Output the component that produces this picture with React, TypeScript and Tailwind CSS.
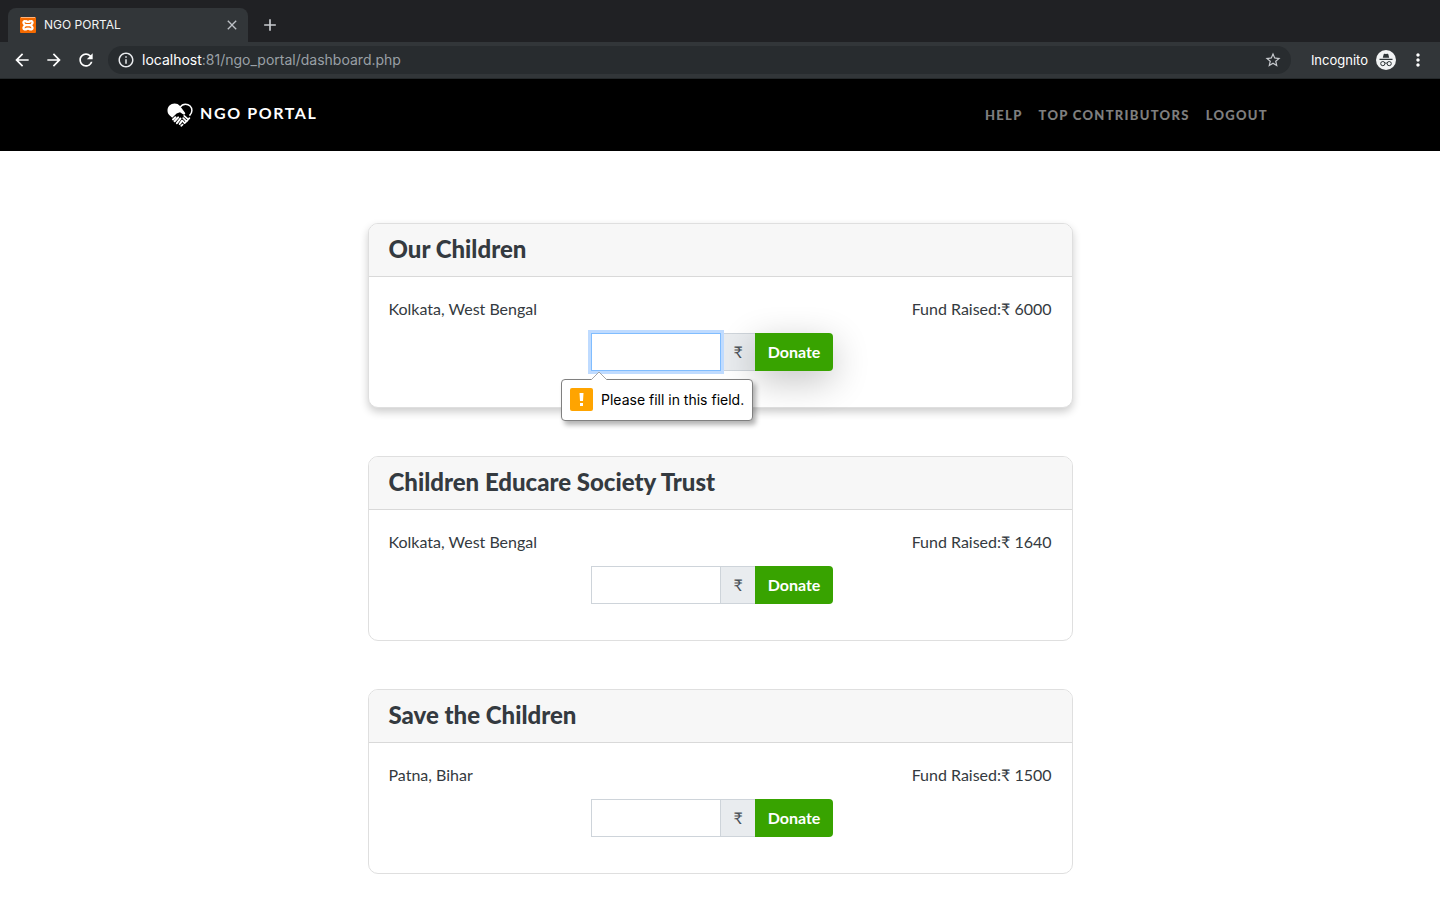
import { useId } from "react";
import { MdArrowBack, MdArrowForward, MdRefresh, MdInfoOutline, MdStarBorder, MdMoreVert, MdClose, MdAdd } from "react-icons/md";

function XamppIcon() {
  return (
    <svg viewBox="0 0 16 16" className="size-4" aria-hidden="true">
      <rect width="16" height="16" rx="1" fill="#f56a00" />
      <rect x="1" y="0" width="14" height="1" fill="#ffb37a" />
      <g fill="none" stroke="#fff" strokeWidth="2.2" strokeLinecap="round" strokeLinejoin="round">
        <path d="M6.500 4.500C5 3.700 3.400 4 3.400 5.600c0 1.500 1.500 1.400 1.500 2.600S3.400 9.400 3.400 11c0 1.500 1.600 1.800 3.100 1" />
        <path d="M9.500 4.500c1.500-.8 3.100-.5 3.100 1.100 0 1.500-1.500 1.400-1.500 2.600s1.500 1.200 1.500 2.800c0 1.500-1.600 1.800-3.100 1" />
        <path d="M6.500 4.500c1 .6 2 .6 3 0M6.500 12c1-.6 2-.6 3 0M5.500 8.200h5" />
      </g>
    </svg>
  );
}

function IncognitoIcon() {
  return (
    <svg viewBox="0 0 20 20" className="size-5" aria-hidden="true">
      <circle cx="10" cy="10" r="10" fill="#f1f3f4" />
      <path d="M6.800 7.800 7.700 4.200c.1-.4.500-.6.900-.5l1.400.4 1.400-.4c.4-.1.800.1.900.500l.9 3.600zM3.500 8.700h13v1.200h-13z" fill="#2e3538" />
      <g fill="none" stroke="#2e3538" strokeWidth="1">
        <circle cx="6.800" cy="13.600" r="2.100" />
        <circle cx="13.200" cy="13.600" r="2.100" />
        <path d="M8.900 13.400c.6-.5 1.600-.5 2.200 0" />
      </g>
    </svg>
  );
}

function HeartHandsLogo() {
  return (
    <svg viewBox="0 0 26 24" className="h-6 w-[26px]" aria-hidden="true">
      <path
        d="M13 3C11.600 1.300 9.800.5 7.600.5 3.500.5.500 3.500.500 7.400c0 2 .7 3.500 2 4.900l2.700 2.400 4.400-4.300 3.400-1.200 3.400 2.300c1.300.5 2.300-.7 1.600-1.800z"
        fill="#fff"
      />
      <path d="M13.200 4.200C14.400 2.200 16.300 1.200 18.500 1.200c3.700 0 6.400 2.700 6.400 6.200 0 2.200-.9 3.700-2.400 5.200" fill="none" stroke="#fff" strokeWidth="1.500" />
      <path d="m8.400 14.200-2.400 2.200m5.200-2-3.600 3.900m5.800-2.700-3.500 4.500m5.200-2.400-2.400 3.300" stroke="#fff" strokeWidth="2" strokeLinecap="round" />
      <path d="m14.200 22.800 1.400-1.200M16 18.200l1.600 2 1.100-1.100m-2.500-3.900 3.400 3.200 1.100-1.200m-3.500-4.300 4 3.500 1.200-1.300" fill="none" stroke="#fff" strokeWidth="1.700" strokeLinecap="round" strokeLinejoin="round" />
    </svg>
  );
}

function BrowserBar() {
  return (
    <div className="bg-[#202124] font-[Inter,sans-serif] text-white">
      <div className="flex h-[42px] items-end pl-2">
        <div className="flex h-[34px] w-60 items-center rounded-t-lg bg-[#323639] px-3 text-xs">
          <XamppIcon />
          <span className="ml-2 flex-1 text-[#f1f3f4]">NGO PORTAL</span>
          <button aria-label="Close tab" className="-mr-1 text-[#bdc1c6]">
            <MdClose className="size-4" />
          </button>
        </div>
        <button aria-label="New tab" className="ml-3 flex h-[34px] items-center text-[#c8cbcf]">
          <MdAdd className="size-5" />
        </button>
      </div>
      <div className="flex h-[37px] items-center border-b border-[#25292b] bg-[#323639] px-3">
        <button aria-label="Back"><MdArrowBack className="size-5" /></button>
        <button aria-label="Forward" className="ml-3"><MdArrowForward className="size-5" /></button>
        <button aria-label="Reload" className="ml-3"><MdRefresh className="size-5" /></button>
        <div className="ml-3 flex h-7 flex-1 items-center rounded-full bg-[#282c2f] px-[9px]">
          <MdInfoOutline className="size-[18px] text-[#e8eaed]" />
          <p className="ml-[7px] flex-1 text-sm text-[#9aa0a6]">
            <span className="text-white">localhost</span>:81/ngo_portal/dashboard.php
          </p>
          <button aria-label="Bookmark this page" className="text-[#c8cbcf]"><MdStarBorder className="size-[18px]" /></button>
        </div>
        <span className="ml-5 mr-2 pt-px text-[13px]">Incognito</span>
        <IncognitoIcon />
        <button aria-label="Menu" className="ml-3"><MdMoreVert className="size-5" /></button>
      </div>
    </div>
  );
}

function SiteNav() {
  return (
    <nav className="bg-black">
      <div className="mx-auto flex h-[72px] max-w-[1106px] items-center justify-between">
        <a href="#home" className="flex items-center gap-[7px] font-bold tracking-widest text-white">
          <HeartHandsLogo />
          <span className="pb-1">NGO PORTAL</span>
        </a>
        <div className="flex gap-4 pr-[5px] pt-0.5 text-[13px] font-black tracking-widest text-white/50">
          <a href="#help">HELP</a>
          <a href="#contributors">TOP CONTRIBUTORS</a>
          <a href="#logout">LOGOUT</a>
        </div>
      </div>
    </nav>
  );
}

function RequiredHint() {
  return (
    <div role="alert" className="absolute left-[-30px] top-[46px] z-10 flex h-[42px] items-center whitespace-nowrap rounded border border-[#808080] bg-white px-2 font-[Inter,sans-serif] text-sm text-black shadow-[3px_4px_5px_rgba(0,0,0,0.3)]">
      <svg viewBox="0 0 16 9" className="absolute left-[29px] top-[-9px] h-[9px] w-4" aria-hidden="true">
        <path d="M0 9 8 1l8 8" fill="#fff" stroke="#a6a6a6" />
      </svg>
      <svg viewBox="0 0 23 24" className="mr-2 h-6 w-[23px]" aria-hidden="true">
        <rect width="23" height="23" rx="2" fill="#ffa400" />
        <path d="M9.500 5h4l-.5 8h-3zM10 15h3v3h-3z" fill="#fff" />
      </svg>
      Please fill in this field.
    </div>
  );
}

type Ngo = { name: string; place: string; raised: number };

const ngos: Ngo[] = [
  { name: "Our Children", place: "Kolkata, West Bengal", raised: 6000 },
  { name: "Children Educare Society Trust", place: "Kolkata, West Bengal", raised: 1640 },
  { name: "Save the Children", place: "Patna, Bihar", raised: 1500 },
];

function NgoCard({ ngo, active }: { ngo: Ngo; active: boolean }) {
  const id = useId();
  return (
    <section className={`rounded-[10px] border border-[#dfdfdf] bg-white ${active ? "shadow-[0_4px_8px_rgba(0,0,0,0.2)]" : ""}`}>
      <h2 className="rounded-t-[9px] border-b border-[#d9d9d9] bg-[#f7f7f7] px-5 pb-[11px] pt-[9px] text-2xl font-black leading-8 text-[#343a40]">{ngo.name}</h2>
      <div className="px-5 pb-9 pt-5">
        <div className="flex justify-between leading-6">
          <span>{ngo.place}</span>
          <span>Fund Raised:₹ {ngo.raised}</span>
        </div>
        <div className="mt-3 flex justify-center pr-4">
          <form className="relative flex h-[38px] w-[242px]" onSubmit={(e) => e.preventDefault()}>
            <input
              id={id}
              required
              className={`relative z-[2] w-[130px] border bg-white px-3 outline-none ${active ? "border-[#80bdff] shadow-[0_0_0_3px_#bfdbff]" : "border-[#ced4da]"}`}
            />
            <label htmlFor={id} className="flex flex-1 items-center justify-center border-y border-[#ced4da] bg-[#e9ecef] text-[#495057]">₹</label>
            <button
              type="submit"
              className={`relative w-[78px] rounded-r bg-[#38a300] font-bold text-white ${active ? "shadow-[0_10px_36px_rgba(0,0,0,0.24)]" : ""}`}
            >
              Donate
            </button>
            {active && <RequiredHint />}
          </form>
        </div>
      </div>
    </section>
  );
}

export default function App() {
  return (
    <div className="min-h-screen bg-white font-[Lato,sans-serif] text-base text-[#343a40]">
      <BrowserBar />
      <SiteNav />
      <main className="mx-auto flex max-w-[705px] flex-col gap-12 pb-6 pt-[72px]">
        {ngos.map((ngo, i) => (
          <NgoCard key={ngo.name} ngo={ngo} active={i === 0} />
        ))}
      </main>
    </div>
  );
}
